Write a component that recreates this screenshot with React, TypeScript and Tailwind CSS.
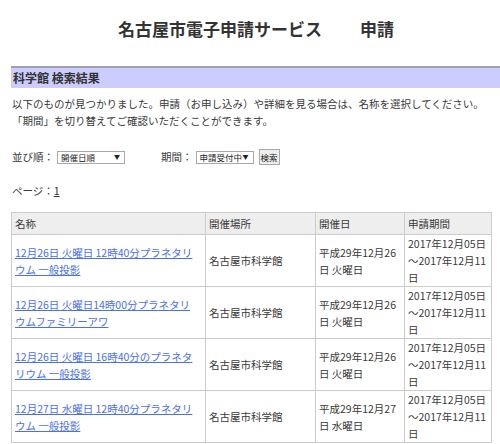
import React from "react";

type Row = {
  name: string[];
  place: string;
  date: string[];
  period: string[];
};

const rows: Row[] = [
  {
    name: ["12月26日 火曜日 12時40分プラネタリ", "ウム 一般投影"],
    place: "名古屋市科学館",
    date: ["平成29年12月26", "日 火曜日"],
    period: ["2017年12月05日", "～2017年12月11", "日"],
  },
  {
    name: ["12月26日 火曜日14時00分プラネタリ", "ウムファミリーアワ"],
    place: "名古屋市科学館",
    date: ["平成29年12月26", "日 火曜日"],
    period: ["2017年12月05日", "～2017年12月11", "日"],
  },
  {
    name: ["12月26日 火曜日 16時40分のプラネタ", "リウム 一般投影"],
    place: "名古屋市科学館",
    date: ["平成29年12月26", "日 火曜日"],
    period: ["2017年12月05日", "～2017年12月11", "日"],
  },
  {
    name: ["12月27日 水曜日 12時40分プラネタリ", "ウム 一般投影"],
    place: "名古屋市科学館",
    date: ["平成29年12月27", "日 水曜日"],
    period: ["2017年12月05日", "～2017年12月11", "日"],
  },
];

function Lines({ items }: { items: string[] }) {
  return (
    <>
      {items.map((t, i) => (
        <span key={i} className="block whitespace-nowrap">
          {t}
        </span>
      ))}
    </>
  );
}

function FakeSelect({ label, width }: { label: string; width: string }) {
  return (
    <span
      className={`inline-flex items-center justify-between h-[13px] border border-[#a9a9a9] bg-white pl-[3px] pr-[4px] text-[8.5px] leading-none text-[#222] ${width}`}
    >
      <span>{label}</span>
      <span className="text-[6px]">▼</span>
    </span>
  );
}

export default function App() {
  return (
    <div
      className="w-[500px] h-[444px] overflow-hidden bg-white text-[#3a3a3a]"
      style={{ fontFamily: '"Noto Sans CJK JP", "Noto Sans", sans-serif' }}
    >
      <h1 className="flex justify-center gap-[38px] pt-[17px] pl-[12px] text-[17px] font-bold leading-[24px] text-[#333]">
        <span>名古屋市電子申請サービス</span>
        <span>申請</span>
      </h1>

      <div className="ml-[11px] mt-[25px] h-[22px] border-t-2 border-[#a0a0b4] bg-[#ccccff] pl-[2px] text-[12px] font-bold leading-[20px] text-[#333]">
        科学館 検索結果
      </div>

      <p className="mt-[7px] pl-[12px] text-[10.5px] leading-[17px]">
        以下のものが見つかりました。申請（お申し込み）や詳細を見る場合は、名称を選択してください。
        <br />
        「期間」を切り替えてご確認いただくことができます。
      </p>

      <div className="mt-[20px] flex items-center pl-[12px] text-[10.5px] leading-[16px]">
        <span>並び順：</span>
        <span className="ml-[3px]">
          <FakeSelect label="開催日順" width="w-[68px]" />
        </span>
        <span className="ml-[36px]">期間：</span>
        <span className="ml-[3px]">
          <FakeSelect label="申請受付中" width="w-[58px]" />
        </span>
        <span className="ml-[5px] inline-flex h-[16px] w-[21px] items-center justify-center border border-[#a9a9a9] bg-[#eeeeee] text-[8.5px] leading-none text-[#222]">
          検索
        </span>
      </div>

      <div className="mt-[17px] pl-[12px] text-[10.5px] leading-[17px]">
        ページ：
        <a href="#" className="underline text-[#333]">
          1
        </a>
      </div>

      <table className="ml-[11px] mt-[13px] w-[480px] table-fixed border-collapse text-[10.5px] leading-[17px]">
        <colgroup>
          <col className="w-[194px]" />
          <col className="w-[110px]" />
          <col className="w-[89px]" />
          <col className="w-[87px]" />
        </colgroup>
        <thead>
          <tr className="h-[22px] bg-[#eeeeee] text-left">
            {["名称", "開催場所", "開催日", "申請期間"].map((h) => (
              <th
                key={h}
                className="border border-[#cccccc] px-[3px] py-0 align-middle font-normal"
              >
                {h}
              </th>
            ))}
          </tr>
        </thead>
        <tbody>
          {rows.map((r, i) => (
            <tr key={i} className="h-[52px]">
              <td className="border border-[#cccccc] px-[3px] py-0 align-middle">
                <a href="#" className="text-[#4a70f0] underline">
                  <Lines items={r.name} />
                </a>
              </td>
              <td className="border border-[#cccccc] px-[3px] py-0 align-middle">
                {r.place}
              </td>
              <td className="border border-[#cccccc] px-[3px] py-0 align-middle">
                <Lines items={r.date} />
              </td>
              <td className="border border-[#cccccc] px-[3px] py-0 align-middle">
                <Lines items={r.period} />
              </td>
            </tr>
          ))}
        </tbody>
      </table>
    </div>
  );
}
